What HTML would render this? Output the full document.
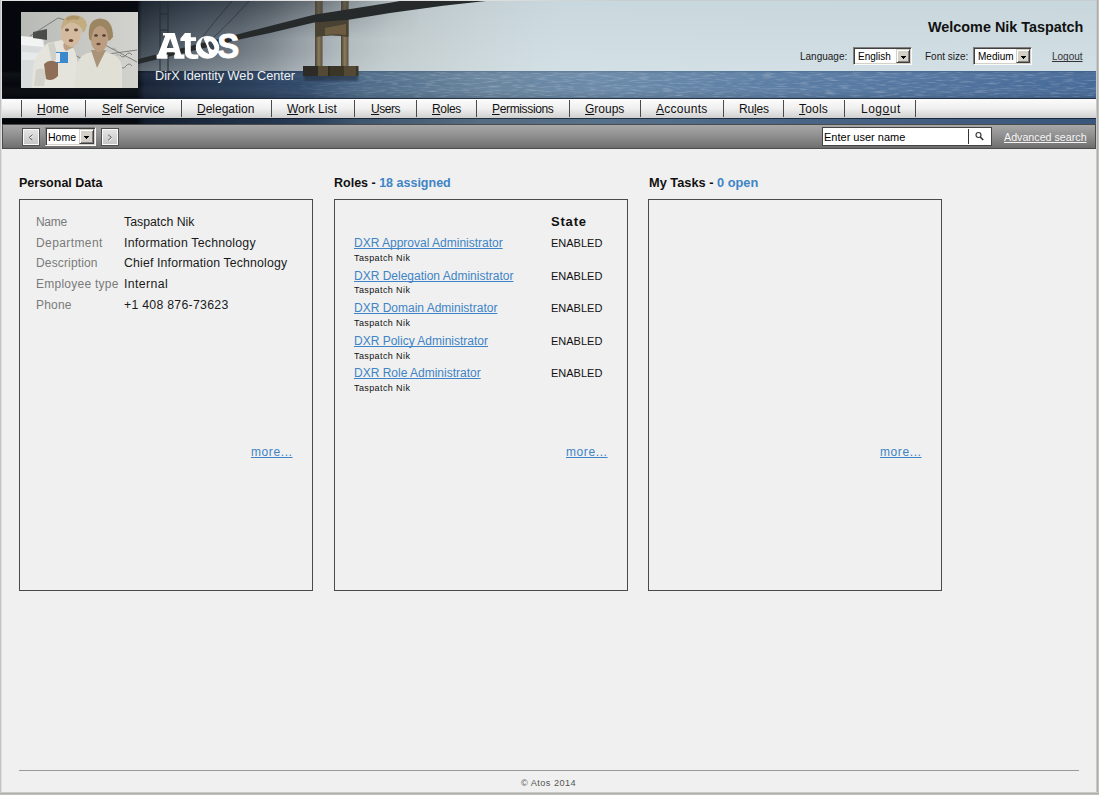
<!DOCTYPE html>
<html><head><meta charset="utf-8">
<style>
html,body{margin:0;padding:0;}
body{width:1099px;height:795px;overflow:hidden;background:#f0f0f0;position:relative;font-family:"Liberation Sans",sans-serif;color:#111;text-decoration-skip-ink:none;}
*{text-decoration-skip-ink:none;}
.a{position:absolute;white-space:nowrap;line-height:1;}
.nav{position:absolute;left:2px;top:99px;width:1094px;height:19px;background:linear-gradient(#fbfbfb 0%,#f0f0f0 45%,#dcdcdc 80%,#cfcfcf 100%);border-top:1px solid #fafafa;box-sizing:border-box;}
.sep{position:absolute;top:100px;width:1px;height:17px;background:#4a4a4a;}
.ni{position:absolute;top:103px;font-size:12px;line-height:1;color:#111;}
.ni u{text-decoration:underline;text-underline-offset:1px;}
.tb{position:absolute;left:2px;top:124px;width:1094px;height:25px;box-sizing:border-box;border:1px solid #4c4c4c;background:linear-gradient(#a8a8a8 0%,#909090 45%,#787878 85%,#6c6c6c 100%);}
.lbl{color:#7a7a7a;}
.box{position:absolute;top:199px;height:392px;width:294px;box-sizing:border-box;border:1px solid #4a4a4a;}
.link{color:#3e84c6;text-decoration:underline;}
.sel{position:absolute;box-sizing:border-box;background:#fff;border-style:solid;border-width:1px;border-color:#808080 #fafafa #fafafa #808080;box-shadow:inset 1px 1px 0 #404040,inset -1px -1px 0 #d4d0c8;}
.dd{position:absolute;box-sizing:border-box;background:#d4d0c8;border:1px solid;border-color:#d4d0c8 #404040 #404040 #d4d0c8;box-shadow:inset 1px 1px 0 #fff,inset -1px -1px 0 #808080;}
.btn{position:absolute;top:128px;width:18px;height:18px;box-sizing:border-box;border:1px solid #505050;box-shadow:inset 0 0 0 1px #fafafa;background:linear-gradient(#e6e6e6,#c4c4c4);}
.btn span{position:absolute;left:0;top:1px;width:15px;text-align:center;font-size:11px;line-height:13px;color:#888;}
.tri{position:absolute;width:5px;height:3px;background:linear-gradient(#000,#000) 0 0/5px 1px no-repeat,linear-gradient(#000,#000) 1px 1px/3px 1px no-repeat,linear-gradient(#000,#000) 2px 2px/1px 1px no-repeat;}
</style></head><body>

<!-- frame -->
<div class="a" style="left:0;top:0;width:1099px;height:1px;background:linear-gradient(90deg,#e2e2e2 0,#e0e0e0 480px,#c8cecf 620px,#c8cecf 100%)"></div>
<div class="a" style="left:0;top:0;width:2px;height:795px;background:linear-gradient(90deg,#c2c2c2 0,#c2c2c2 1px,#e0e0e0 1px,#e0e0e0 2px)"></div>
<div class="a" style="left:1096px;top:0;width:3px;height:795px;background:linear-gradient(90deg,#d4d4d0,#b0b0ac,#c8c8c4)"></div>
<div class="a" style="left:0;top:792px;width:1099px;height:3px;background:linear-gradient(#d4d4d0,#b0b0ac,#c8c8c4)"></div>

<!-- header scene -->
<svg class="a" style="left:2px;top:1px" width="1094" height="123" viewBox="2 1 1094 123">
  <defs>
    <linearGradient id="sky" x1="2" x2="1096" y1="0" y2="0" gradientUnits="userSpaceOnUse">
      <stop offset="0.0000" stop-color="#04070b"/>
      <stop offset="0.1243" stop-color="#070b11"/>
      <stop offset="0.1280" stop-color="#222c37"/>
      <stop offset="0.1536" stop-color="#34404c"/>
      <stop offset="0.1810" stop-color="#44505c"/>
      <stop offset="0.2176" stop-color="#56606a"/>
      <stop offset="0.2450" stop-color="#6c767e"/>
      <stop offset="0.2724" stop-color="#8a949a"/>
      <stop offset="0.3090" stop-color="#a6b0b4"/>
      <stop offset="0.3547" stop-color="#b8c3c6"/>
      <stop offset="0.4369" stop-color="#c4d0d4"/>
      <stop offset="0.5101" stop-color="#c9d8de"/>
      <stop offset="1.0000" stop-color="#c8d7dd"/>
    </linearGradient>
    <linearGradient id="cloud" x1="0" x2="0" y1="1" y2="71" gradientUnits="userSpaceOnUse">
      <stop offset="0" stop-color="#10161e" stop-opacity="0.25"/>
      <stop offset="0.6" stop-color="#10161e" stop-opacity="0"/>
    </linearGradient>
    <linearGradient id="sea" x1="2" x2="1096" y1="0" y2="0" gradientUnits="userSpaceOnUse">
      <stop offset="0.0000" stop-color="#04070b"/>
      <stop offset="0.1234" stop-color="#080d14"/>
      <stop offset="0.1307" stop-color="#182438"/>
      <stop offset="0.1810" stop-color="#22344c"/>
      <stop offset="0.2724" stop-color="#30496a"/>
      <stop offset="0.3272" stop-color="#4c6a88"/>
      <stop offset="0.4369" stop-color="#68849e"/>
      <stop offset="0.5466" stop-color="#6a8aaa"/>
      <stop offset="0.7294" stop-color="#5a7ca4"/>
      <stop offset="0.9122" stop-color="#4c6f9c"/>
      <stop offset="1.0000" stop-color="#466a98"/>
    </linearGradient>
    <linearGradient id="seav" x1="0" x2="0" y1="71" y2="98" gradientUnits="userSpaceOnUse">
      <stop offset="0" stop-color="#000" stop-opacity="0.1"/>
      <stop offset="0.15" stop-color="#fff" stop-opacity="0.04"/>
      <stop offset="0.5" stop-color="#fff" stop-opacity="0"/>
      <stop offset="1" stop-color="#000" stop-opacity="0.12"/>
    </linearGradient>
    <linearGradient id="pil" x1="0" x2="1" y1="0" y2="0">
      <stop offset="0" stop-color="#4a4232"/>
      <stop offset="0.5" stop-color="#8a7c5e"/>
      <stop offset="1" stop-color="#5a5040"/>
    </linearGradient>
    <linearGradient id="vdark" x1="0" x2="0" y1="1" y2="71" gradientUnits="userSpaceOnUse">
      <stop offset="0" stop-color="#141c26" stop-opacity="0.35"/>
      <stop offset="0.55" stop-color="#141c26" stop-opacity="0"/>
      <stop offset="1" stop-color="#e0e8ec" stop-opacity="0.12"/>
    </linearGradient>
    <linearGradient id="hfade" x1="138" x2="420" y1="0" y2="0" gradientUnits="userSpaceOnUse">
      <stop offset="0" stop-color="#fff"/>
      <stop offset="0.6" stop-color="#fff"/>
      <stop offset="1" stop-color="#000"/>
    </linearGradient>
    <mask id="hm" maskUnits="userSpaceOnUse" x="138" y="1" width="290" height="71"><rect x="138" y="1" width="290" height="71" fill="url(#hfade)"/></mask>
    <linearGradient id="nfade" x1="230" x2="420" y1="0" y2="0" gradientUnits="userSpaceOnUse">
      <stop offset="0" stop-color="#000"/>
      <stop offset="1" stop-color="#fff"/>
    </linearGradient>
    <mask id="nm" maskUnits="userSpaceOnUse" x="2" y="60" width="1094" height="64"><rect x="2" y="60" width="1094" height="64" fill="url(#nfade)"/></mask>
    <linearGradient id="vlight" x1="0" x2="0" y1="1" y2="71" gradientUnits="userSpaceOnUse">
      <stop offset="0" stop-color="#fff" stop-opacity="0"/>
      <stop offset="1" stop-color="#f4fcff" stop-opacity="0.22"/>
    </linearGradient>
    <filter id="bl" x="-10%" y="-10%" width="120%" height="120%"><feGaussianBlur stdDeviation="0.6"/></filter>
    <filter id="bl3" x="-10%" y="-10%" width="120%" height="120%"><feGaussianBlur stdDeviation="0.75"/></filter>
    <filter id="noise" x="0" y="0" width="100%" height="100%"><feTurbulence type="fractalNoise" baseFrequency="0.08 0.6" numOctaves="2" seed="3"/><feColorMatrix type="matrix" values="0 0 0 0 1  0 0 0 0 1  0 0 0 0 1  0 0 0 1.6 -0.75"/></filter>
    <filter id="bl2" x="-10%" y="-10%" width="120%" height="120%"><feGaussianBlur stdDeviation="1"/></filter>
  </defs>
  <rect x="2" y="1" width="1094" height="97" fill="url(#sky)"/>
  
  <rect x="138" y="1" width="290" height="70" fill="url(#vdark)" mask="url(#hm)"/>
  <rect x="138" y="1" width="958" height="70" fill="url(#vlight)"/>
  <rect x="2" y="71" width="1094" height="28" fill="url(#sea)"/>
  <rect x="2" y="71" width="1094" height="27" fill="url(#seav)"/>
  <g mask="url(#nm)"><rect x="150" y="72" width="946" height="25" filter="url(#noise)" opacity="0.35"/></g>
  <g mask="url(#nm)"><rect x="150" y="119" width="946" height="4" filter="url(#noise)" opacity="0.3"/></g>
  <rect x="2" y="118" width="1094" height="6" fill="url(#sea)"/>
  <rect x="2" y="118" width="1094" height="1" fill="#0e1a2a" opacity="0.7"/>
  <rect x="2" y="118" width="1094" height="6" fill="#000" opacity="0.18"/>
  <rect x="2" y="98" width="1094" height="1" fill="#1e2834" opacity="0.85"/>
  <g filter="url(#bl)">
  <!-- far lattice tower -->
  <g stroke="#262c34" stroke-width="1.3" fill="none" opacity="0.75">
    <line x1="160" y1="1" x2="160" y2="95"/>
    <line x1="168" y1="1" x2="168" y2="95"/>
    <line x1="160" y1="14" x2="168" y2="14"/>
    <line x1="160" y1="30" x2="168" y2="30"/>
    <line x1="160" y1="46" x2="168" y2="46"/>
  </g>
  <!-- cables -->
  <g stroke="#1c242e" stroke-width="0.9" fill="none" opacity="0.6">
    <path d="M232 1 Q 214 22 200 40"/>
    <path d="M249 1 Q 230 22 214 37"/>
  </g>
  <!-- tower -->
  <rect x="315" y="1" width="7.5" height="66" fill="url(#pil)"/>
  <rect x="341" y="1" width="7.5" height="66" fill="url(#pil)"/>
  <rect x="315" y="1" width="7.5" height="16" fill="#4a463e" opacity="0.6"/>
  <rect x="341" y="1" width="7.5" height="16" fill="#4a463e" opacity="0.6"/>
  <path d="M315 20 L 348.5 18 L 348.5 37 Q 332 34 315 37 Z" fill="#4a4232"/>
  <path d="M325 28 L 346 24 L 346 35 Q 336 33.5 325 35 Z" fill="#7a6a4a" opacity="0.7"/>
  <rect x="304" y="74" width="54" height="7" fill="#1e2630" opacity="0.5" filter="url(#bl2)"/>
  <rect x="303" y="66" width="27" height="10" fill="#2e2c28"/>
  <rect x="330" y="66" width="28.5" height="10" fill="#3a3428"/>
  <rect x="318" y="66" width="10" height="10" fill="#6a5c40" opacity="0.6"/>
  <rect x="344" y="66" width="12" height="10" fill="#6a5c40" opacity="0.5"/>
  <!-- deck -->
  <path d="M136 59.5 L237 34.5 L270 26 L314 14.7 L390 2.7 L400 1 L486 1 L443 5.7 L390 13.1 L348.6 19.7 L314 22.5 L270 33 L237 40 L136 64.5 Z" fill="#26292c"/>
  </g>
  <!-- photo -->
  <svg x="21" y="12" width="117" height="76" viewBox="21 12 117 76">
  <defs>
    <linearGradient id="pbg" x1="0" x2="1" y1="0" y2="0">
      <stop offset="0" stop-color="#b8bab6"/>
      <stop offset="0.5" stop-color="#c6c7c2"/>
      <stop offset="1" stop-color="#d2d2ce"/>
    </linearGradient>
  </defs>
  <rect x="21" y="12" width="117" height="76" fill="url(#pbg)"/>
  <g filter="url(#bl3)">
    <rect x="21" y="12" width="117" height="76" fill="url(#pbg)"/>
    <path d="M21 38 L 44 40 L 46 88 L 21 88 Z" fill="#d8dcdc"/>
    <path d="M21 36 L 42 38 L 44 47 L 21 45 Z" fill="#f2f4f4"/>
    <path d="M22 52 L 40 53 L 40 60 L 22 60 Z" fill="#e6eaea"/>
    <path d="M33 32 L 47 29 L 47 40 L 33 38 Z" fill="#4a4e4a"/>
    <!-- diagram lines -->
    <g stroke="#5a5c58" stroke-width="0.8" fill="none" opacity="0.85">
      <path d="M30 36 L 58 18 L 84 25"/>
      <path d="M60 46 L 80 58 L 137 50"/>
      <path d="M105 45 L 137 62"/>
      <path d="M55 72 L 110 82"/>
      <path d="M120 55 q3 4 6 0 q3 -4 6 0 M120 66 q3 4 6 0 q3 -4 6 0"/>
    </g>
    <!-- woman 1 -->
    <path d="M32 88 L 33 68 Q 36 50 48 43 L 62 40 L 72 46 Q 80 56 78 88 Z" fill="#e4e4dc"/>
    <path d="M48 44 L 54 42 L 58 58 L 52 62 Z" fill="#cfd0c8"/>
    <path d="M36 70 Q 42 66 46 72 L 44 86 L 34 86 Z" fill="#d2d2ca"/>
    <path d="M64 42 Q 62 48 66 51 L 74 47 Z" fill="#bca084"/>
    <path d="M61 31 Q 62 23 71 22 Q 81 23 81 33 Q 80 45 71 47 Q 62 44 61 36 Z" fill="#d4ba9e"/>
    <path d="M61 28 Q 63 15 74 15 Q 85 15 87 25 Q 86 30 83 33 Q 81 24 72 22.5 Q 65 23 61.5 30 Z" fill="#c2ac80"/>
    <path d="M66 18 Q 72 14 80 17 L 78 20 Q 72 18 67 21 Z" fill="#9c8458" opacity="0.6"/>
    <ellipse cx="67" cy="30" rx="2" ry="1.4" fill="#5e4838"/>
    <ellipse cx="76" cy="30" rx="2" ry="1.4" fill="#5e4838"/>
    <ellipse cx="71" cy="40.5" rx="2.2" ry="1.6" fill="#6a3e34"/>
    <path d="M44 64 Q 50 58 58 63 L 58 76 Q 52 82 46 79 Z" fill="#8e6e56"/>
    <rect x="56" y="52" width="12" height="11" fill="#3a88cc"/>
    <rect x="56" y="53" width="4" height="9" fill="#e8ecf0"/>
    <!-- woman 2 -->
    <path d="M74 88 L 77 64 Q 81 53 92 52 L 106 52 Q 120 55 122 66 L 122 88 Z" fill="#e0e0d6"/>
    <path d="M91 50 L 106 50 L 97 68 Z" fill="#ab937a"/>
    <path d="M91 33 Q 92 26 100 26 Q 108 27 108 35 Q 108 50 99.5 52 Q 91 50 91 40 Z" fill="#bb9d82"/>
    <path d="M89 38 Q 87 19 100 18.5 Q 113 19 113 37 Q 111 40 108 41 Q 108 27 100 26 Q 92 27 91.5 41 Q 89 40 89 38 Z" fill="#9c8662"/>
    <ellipse cx="96" cy="35.5" rx="1.8" ry="1.2" fill="#4e3a2e"/>
    <ellipse cx="104" cy="35.5" rx="1.8" ry="1.2" fill="#4e3a2e"/>
    <ellipse cx="98.5" cy="44" rx="2.2" ry="1.3" fill="#6a4438"/>
    <g stroke="#7a7c76" stroke-width="0.6" fill="none" opacity="0.7">
      <path d="M112 50 q2 -4 4 0 M116 55 l4 0"/>
    </g>
  </g>
  </svg>
</svg>

<!-- header texts -->
<svg class="a" style="left:150px;top:28px" width="95" height="34" viewBox="150 28 95 34">
<g fill="#fff">
<path d="M163 32.9 L174.7 32.9 L181.2 54.6 L184.5 54.6 L184.5 58.7 L174.2 58.7 L174.2 54.6 L175.2 54.6 L174.4 52.2 L167 52.2 L166.3 54.6 L167.5 54.6 L167.5 58.7 L156.6 58.7 L156.6 54.6 L158 54.6 L165.3 35.6 L163 35.6 Z M170.2 38.6 L173.6 48 L166.8 48 Z" fill-rule="evenodd"/>
<path d="M184.9 33 L190.8 33 L190.8 37.2 L196 37.2 L196 40.9 L190.8 40.9 L190.8 51 Q190.8 54.6 194.3 54.6 L198.4 54.6 L198.4 58.4 Q196 58.9 192.5 58.9 Q184.9 58.9 184.9 52 L184.9 40.9 L180.4 40.9 L180.4 38.6 Z"/>
<path d="M219.2 47.4 A11.7 11.3 0 1 1 195.8 47.4 A11.7 11.3 0 1 1 219.2 47.4 Z M203.2 37.4 Q195.9 48.6 209.3 54.2 Q207 45 203.2 37.4 Z" fill-rule="evenodd"/>
</g>
<ellipse cx="211.3" cy="45.6" rx="2.2" ry="4.6" transform="rotate(-28 211.3 45.6)" fill="#3c4652"/>
<text x="0" y="0" transform="translate(217.3 58.3) scale(0.95 1)" font-family="Liberation Sans" font-weight="bold" font-size="34.8" fill="#fff" stroke="#fff" stroke-width="0.9">S</text>
</svg>
<div class="a" style="left:155px;top:70px;font-size:12.7px;color:#eef2f5">DirX Identity Web Center</div>
<div class="a" style="left:928px;top:20px;font-size:14.4px;font-weight:bold;color:#111">Welcome Nik Taspatch</div>
<div class="a" style="left:800px;top:52px;font-size:10px;color:#1a1a1a">Language:</div>
<div class="sel" style="left:853px;top:47px;width:59px;height:18px"></div>
<div class="a" style="left:858px;top:52px;font-size:10px;color:#000">English</div>
<div class="dd" style="left:896px;top:49px;width:14px;height:14px"><div class="tri" style="left:4px;top:6px"></div></div>
<div class="a" style="left:925px;top:52px;font-size:10px;color:#1a1a1a">Font size:</div>
<div class="sel" style="left:973px;top:47px;width:59px;height:18px"></div>
<div class="a" style="left:978px;top:52px;font-size:10px;color:#000">Medium</div>
<div class="dd" style="left:1016px;top:49px;width:14px;height:14px"><div class="tri" style="left:4px;top:6px"></div></div>
<div class="a" style="left:1052px;top:52px;font-size:10px;color:#333;text-decoration:underline">Logout</div>

<!-- nav -->
<div class="nav"></div>
<div class="sep" style="left:21px"></div>
<div class="sep" style="left:85px"></div>
<div class="sep" style="left:181px"></div>
<div class="sep" style="left:271px"></div>
<div class="sep" style="left:354px"></div>
<div class="sep" style="left:416px"></div>
<div class="sep" style="left:476px"></div>
<div class="sep" style="left:569px"></div>
<div class="sep" style="left:640px"></div>
<div class="sep" style="left:723px"></div>
<div class="sep" style="left:783px"></div>
<div class="sep" style="left:844px"></div>
<div class="sep" style="left:915px"></div>
<div class="ni" style="left:37px"><u>H</u>ome</div>
<div class="ni" style="left:102px;letter-spacing:-.12px"><u>S</u>elf Service</div>
<div class="ni" style="left:197px"><u>D</u>elegation</div>
<div class="ni" style="left:287px"><u>W</u>ork List</div>
<div class="ni" style="left:371px;letter-spacing:-.45px"><u>U</u>sers</div>
<div class="ni" style="left:432px;letter-spacing:-.35px"><u>R</u>oles</div>
<div class="ni" style="left:492px;letter-spacing:-.35px"><u>P</u>ermissions</div>
<div class="ni" style="left:585px"><u>G</u>roups</div>
<div class="ni" style="left:656px;letter-spacing:.28px"><u>A</u>ccounts</div>
<div class="ni" style="left:739px;letter-spacing:-.2px">Ru<u>l</u>es</div>
<div class="ni" style="left:799px;letter-spacing:.2px"><u>T</u>ools</div>
<div class="ni" style="left:861px;letter-spacing:.5px">Log<u>o</u>ut</div>

<!-- toolbar -->
<div class="tb"></div>
<div class="btn" style="left:22px"><svg style="position:absolute;left:5px;top:5px" width="6" height="7" viewBox="0 0 6 7"><polyline points="4.5,0.8 1.2,3.5 4.5,6.2" fill="none" stroke="#fff" stroke-width="1" transform="translate(0.6 0.6)"/><polyline points="4.5,0.8 1.2,3.5 4.5,6.2" fill="none" stroke="#555" stroke-width="1"/></svg></div>
<div class="sel" style="left:45px;top:127px;width:51px;height:19px"></div>
<div class="a" style="left:48px;top:132px;font-size:10.5px;color:#000">Home</div>
<div class="dd" style="left:79px;top:129px;width:15px;height:15px"><div class="tri" style="left:4px;top:6px"></div></div>
<div class="btn" style="left:101px"><svg style="position:absolute;left:5px;top:5px" width="6" height="7" viewBox="0 0 6 7"><polyline points="1.2,0.8 4.5,3.5 1.2,6.2" fill="none" stroke="#fff" stroke-width="1" transform="translate(0.6 0.6)"/><polyline points="1.2,0.8 4.5,3.5 1.2,6.2" fill="none" stroke="#555" stroke-width="1"/></svg></div>
<div class="a" style="left:822px;top:127px;width:170px;height:19px;box-sizing:border-box;background:#fff;border:1px solid #454545"></div>
<div class="a" style="left:824px;top:132px;font-size:11px;color:#000">Enter user name</div>
<div class="a" style="left:968px;top:129px;width:1px;height:15px;background:#333"></div>
<svg class="a" style="left:974px;top:131px" width="12" height="12" viewBox="0 0 12 12"><circle cx="4.5" cy="4" r="2.5" fill="none" stroke="#333" stroke-width="1.1"/><line x1="6.3" y1="6" x2="9.2" y2="9" stroke="#333" stroke-width="1.6"/></svg>
<div class="a" style="left:1004px;top:132px;font-size:10.7px;color:#f4f4f4;text-decoration:underline">Advanced search</div>

<!-- content -->
<div class="a" style="left:19px;top:177px;font-size:12.5px;font-weight:bold">Personal Data</div>
<div class="a" style="left:334px;top:177px;font-size:12.5px;font-weight:bold">Roles - <span style="color:#3e84c6">18 assigned</span></div>
<div class="a" style="left:649px;top:177px;font-size:12.8px;font-weight:bold">My Tasks - <span style="color:#3e84c6">0 open</span></div>

<div class="box" style="left:19px"></div>
<div class="box" style="left:334px"></div>
<div class="box" style="left:648px"></div>

<div class="a lbl" style="left:36px;top:216px;font-size:12px;letter-spacing:-.3px">Name</div>
<div class="a lbl" style="left:36px;top:237px;font-size:12px;letter-spacing:.4px">Department</div>
<div class="a lbl" style="left:36px;top:257px;font-size:12px;letter-spacing:.15px">Description</div>
<div class="a lbl" style="left:36px;top:278px;font-size:12px;letter-spacing:.25px">Employee type</div>
<div class="a lbl" style="left:36px;top:299px;font-size:12px;letter-spacing:.2px">Phone</div>
<div class="a" style="left:124px;top:216px;font-size:12.3px;color:#1a1a1a">Taspatch Nik</div>
<div class="a" style="left:124px;top:237px;font-size:12.3px;letter-spacing:.22px;color:#1a1a1a">Information Technology</div>
<div class="a" style="left:124px;top:257px;font-size:12.3px;letter-spacing:.15px;color:#1a1a1a">Chief Information Technology</div>
<div class="a" style="left:124px;top:278px;font-size:12.3px;letter-spacing:.4px;color:#1a1a1a">Internal</div>
<div class="a" style="left:124px;top:299px;font-size:12.3px;letter-spacing:.27px;color:#1a1a1a">+1 408 876-73623</div>

<div class="a" style="left:551px;top:215px;font-size:13px;letter-spacing:.8px;font-weight:bold">State</div>
<div class="a link" style="left:354px;top:237px;font-size:12px">DXR Approval Administrator</div>
<div class="a" style="left:354px;top:254px;font-size:9px;letter-spacing:.4px;color:#111">Taspatch Nik</div>
<div class="a" style="left:551px;top:238px;font-size:11px;color:#111">ENABLED</div>
<div class="a link" style="left:354px;top:270px;font-size:12px">DXR Delegation Administrator</div>
<div class="a" style="left:354px;top:286px;font-size:9px;letter-spacing:.4px;color:#111">Taspatch Nik</div>
<div class="a" style="left:551px;top:271px;font-size:11px;color:#111">ENABLED</div>
<div class="a link" style="left:354px;top:302px;font-size:12px">DXR Domain Administrator</div>
<div class="a" style="left:354px;top:319px;font-size:9px;letter-spacing:.4px;color:#111">Taspatch Nik</div>
<div class="a" style="left:551px;top:303px;font-size:11px;color:#111">ENABLED</div>
<div class="a link" style="left:354px;top:335px;font-size:12px">DXR Policy Administrator</div>
<div class="a" style="left:354px;top:352px;font-size:9px;letter-spacing:.4px;color:#111">Taspatch Nik</div>
<div class="a" style="left:551px;top:336px;font-size:11px;color:#111">ENABLED</div>
<div class="a link" style="left:354px;top:367px;font-size:12px">DXR Role Administrator</div>
<div class="a" style="left:354px;top:384px;font-size:9px;letter-spacing:.4px;color:#111">Taspatch Nik</div>
<div class="a" style="left:551px;top:368px;font-size:11px;color:#111">ENABLED</div>

<div class="a link" style="left:251px;top:446px;font-size:12px;letter-spacing:.6px">more...</div>
<div class="a link" style="left:566px;top:446px;font-size:12px;letter-spacing:.6px">more...</div>
<div class="a link" style="left:880px;top:446px;font-size:12px;letter-spacing:.6px">more...</div>

<!-- footer -->
<div class="a" style="left:19px;top:770px;width:1060px;height:1px;background:#9a9a9a"></div>
<div class="a" style="left:521px;top:779px;font-size:9.2px;letter-spacing:.45px;color:#555">© Atos 2014</div>

</body></html>
